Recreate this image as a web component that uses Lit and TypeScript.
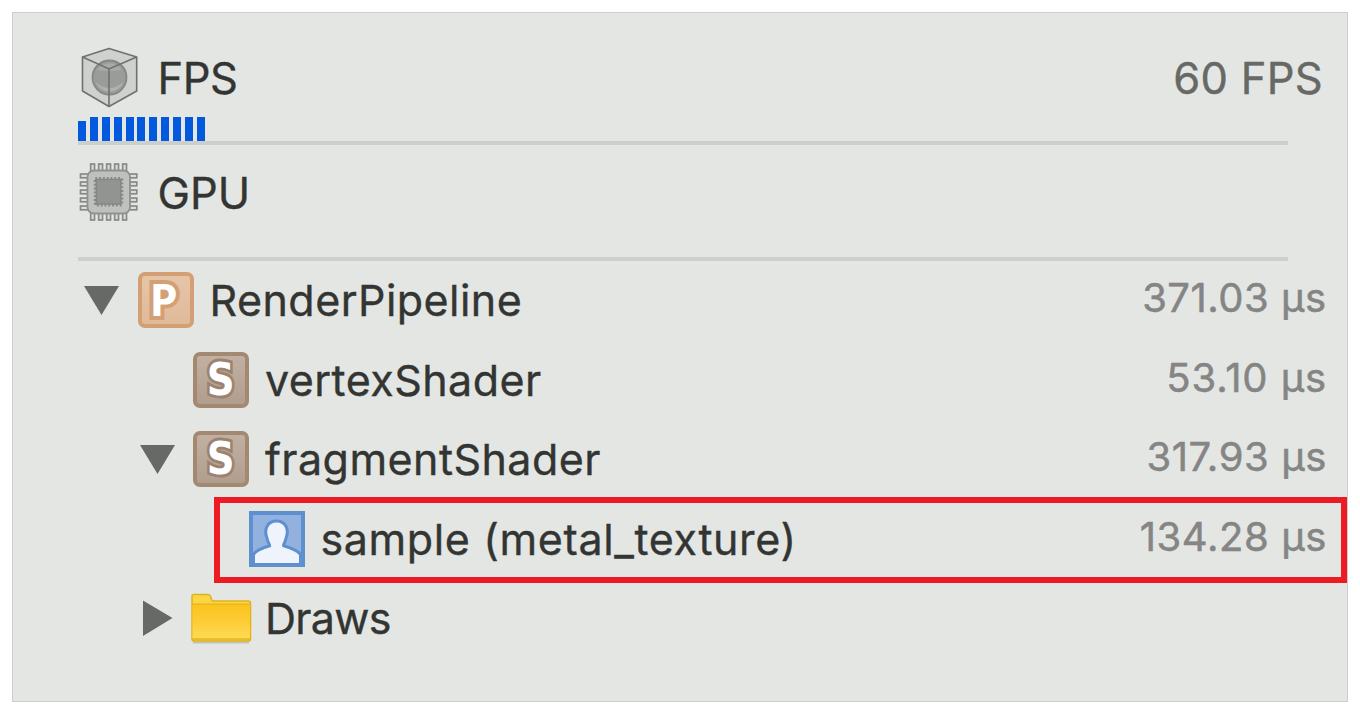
import { LitElement, html, css, svg, nothing } from "lit";
import { customElement, property } from "lit/decorators.js";

const range = (n: number) => Array.from({ length: n }, (_, i) => i);

const cubeIcon = html`<svg width="60" height="62" viewBox="80 46 60 62">
  <path d="M109 48.500 L136.700 57 V91 L109 106.500 L82.500 91 V57Z" fill="#cfd1ce" stroke="#6f716f" stroke-width="1.600" stroke-linejoin="round"/>
  <circle cx="109.500" cy="77.500" r="17" fill="#9a9c99" stroke="#858785" stroke-width="1.800"/>
  <path d="M97 70a15 15 0 0 1 25 0l-13.500 1Z" fill="#a8aaa7"/>
  <path d="M95.500 82a15 15 0 0 0 28 0q-14 12-28 0Z" fill="#afb1ae"/>
  <path d="M82.500 57 L109 69 L136.700 57 M109 69V106" fill="none" stroke="#6f716f" stroke-width="1.600"/>
</svg>`;

const chipIcon = html`<svg width="60" height="60" viewBox="79 162 60 60">
  <g fill="#dcdedb" stroke="#888a87" stroke-width="1.700">
    ${range(5).map((i) => svg`
      <rect x=${90.7 + i * 8} y="164" width="3.8" height="8"/>
      <rect x=${90.7 + i * 8} y="212" width="3.8" height="8"/>
      <rect x="80.500" y=${174 + i * 8} width="8" height="3.8"/>
      <rect x="128.800" y=${174 + i * 8} width="8" height="3.8"/>`)}
  </g>
  <rect x="87.500" y="170.500" width="42.500" height="43" rx="6.500" fill="#bfc1be" stroke="#8f918e" stroke-width="1.800"/>
  <rect x="95.300" y="178.500" width="26.500" height="26.500" fill="none" stroke="#888a87" stroke-width="3" stroke-dasharray="1.900 1.900"/>
  <rect x="96.300" y="179.500" width="24.500" height="24.500" fill="#929491" stroke="#858784" stroke-width="1.500"/>
</svg>`;

const letterIcon = (letter: string, kind: string, x: number, y: number) => html`
  <svg class=${kind} width="56" height="56" viewBox="0 0 56 56">
    <defs><linearGradient id="g" x1="0" y1="0" x2="0" y2="1">
      <stop class="top" offset="0"/><stop class="bottom" offset="1"/></linearGradient></defs>
    <rect x="2" y="2" width="52" height="52" rx="5" fill="url(#g)" class="edge" stroke-width="4"/>
    <text x=${x} y=${y} class="letter">${letter}</text>
  </svg>`;

const personIcon = html`<svg width="56" height="56" viewBox="0 0 56 56">
  <rect x="2" y="2" width="52" height="52" fill="#93b1df" stroke="#5e90d0" stroke-width="4"/>
  <path d="M6 52V44Q8 40 22 36C23 33 20 31 19.500 27C16 18 20 11.500 27.500 11.500S39 18 35.500 27C35 31 32 33 33.500 36Q47 40 50 44V52Z"
    fill="#eef3fc" stroke="#5e90d0" stroke-width="6" stroke-linejoin="round" paint-order="stroke"/>
  <path d="M2 2H54V54H2Z" fill="none" stroke="#5e90d0" stroke-width="4"/>
</svg>`;

const folderIcon = html`<svg width="62" height="52" viewBox="190 592.500 62 52">
  <defs><linearGradient id="f" x1="0" y1="0" x2="0" y2="1">
    <stop offset="0" stop-color="#fbc31d"/><stop offset=".45" stop-color="#fdcb33"/><stop offset="1" stop-color="#fddb55"/></linearGradient></defs>
  <path d="M193 643H249" stroke="#bfc1be" stroke-width="1.800"/>
  <path d="M192 597q0-2 2-2h14q2 0 2.500 2l1 3q.5 1.500 2 1.500H248q2.500 0 2.500 2.500V639.500q0 2-2 2H194q-2 0-2-2Z" fill="#fcd545" stroke="#dfb21a" stroke-width="1.500"/>
  <rect x="192.500" y="604.700" width="57.500" height="34.500" fill="url(#f)"/>
  <path d="M192 604.700H250.500 M192.500 639.500H250" stroke="#e3b51d" stroke-width="1.300"/>
</svg>`;

const icons: Record<string, unknown> = {
  P: letterIcon("P", "pipeline", 11.5, 43.5),
  S: letterIcon("S", "shader", 15.5, 43.500),
  person: personIcon,
  folder: folderIcon,
};

interface Row {
  name: string;
  cls: string;
  depth: number;
  icon: string;
  arrow?: "open" | "closed";
  time?: string;
}

const rows: Row[] = [
  { name: "RenderPipeline", cls: "render", depth: 0, icon: "P", arrow: "open", time: "371.03 µs" },
  { name: "vertexShader", cls: "vertex", depth: 1, icon: "S", time: "53.10 µs" },
  { name: "fragmentShader", cls: "fragment", depth: 1, icon: "S", arrow: "open", time: "317.93 µs" },
  { name: "sample (metal_texture)", cls: "sample", depth: 2, icon: "person", time: "134.28 µs" },
  { name: "Draws", cls: "draws", depth: 1, icon: "folder", arrow: "closed" },
];

@customElement("tree-row")
class TreeRow extends LitElement {
  @property({ attribute: false }) row!: Row;

  static styles = css`
    :host { display: block; height: 79.5px; }
    .row { display: flex; align-items: center; height: 100%; position: relative; }
    .d0 { padding-left: 70px; }
    .d1 { padding-left: 125.500px; }
    .d2 { padding-left: 181px; }
    .arrow { width: 36px; height: 36px; margin-right: 18.500px; flex: none; }
    .icon { width: 56px; height: 56px; flex: none; display: flex; align-items: center; justify-content: center; }
    .icon svg { flex: none; display: block; overflow: visible; }
    .name { flex: 1; margin-left: 16px; font-size: 43px; line-height: 56px; color: #333533; white-space: pre; letter-spacing: 0.45px; -webkit-text-stroke: 0.35px #333533; }
    .sample { letter-spacing: 0.62px; }
    .draws { letter-spacing: -0.7px; }
    .time { margin-right: 20.500px; font-size: 40px; line-height: 56px; color: #848584; white-space: pre; padding-bottom: 4px; letter-spacing: 0.5px; -webkit-text-stroke: 0.5px #848584; }
    .time.vertex { letter-spacing: 0.9px; margin-right: 20px; }
    .time.fragment, .time.sample { margin-right: 20px; letter-spacing: 0.6px; }
    .letter { font: 700 45px "Open Sans", sans-serif; fill: #fff; paint-order: stroke; stroke: var(--edge); stroke-width: 8px; }
    .edge { stroke: var(--edge); }
    .top { stop-color: var(--top); }
    .bottom { stop-color: var(--bottom); }
    .pipeline { --edge: #d59f75; --top: #e6c5a8; --bottom: #dfba99; }
    .shader { --edge: #a48972; --top: #c2b0a2; --bottom: #b09d8e; }
    .shader .letter { font: 700 44px "DejaVu Sans", sans-serif; transform: scaleX(0.88); stroke: #9c8370; stroke-width: 6px; }
    .mark { position: absolute; left: 201px; right: 0; top: -2.250px; height: 86px; box-sizing: border-box; border: 6px solid #ed1c24; }
  `;

  render() {
    const r = this.row;
    return html`<div class="row d${r.depth}">
      <svg class="arrow" viewBox="0 0 36 36">
        ${r.arrow === "open" ? svg`<path d="M1 4H36L18.500 33Z" fill="#666966"/>`
          : r.arrow === "closed" ? svg`<path d="M4 .5V36L33.500 18Z" fill="#666966"/>` : nothing}
      </svg>
      <span class="icon">${icons[r.icon]}</span>
      <span class="name ${r.cls}">${r.name}</span>
      ${r.time ? html`<span class="time ${r.cls}">${r.time}</span>` : nothing}
      ${r.icon === "person" ? html`<div class="mark"></div>` : nothing}
    </div>`;
  }
}

@customElement("app-root")
class AppRoot extends LitElement {
  static styles = css`
    :host { display: block; box-sizing: border-box; width: 1360px; height: 714px; padding: 12px; background: #fff; font-family: Inter, sans-serif; }
    .panel { box-sizing: border-box; height: 690px; border: 1px solid #cdcfcc; background: #e4e6e3; overflow: hidden; }
    .gauge { display: flex; flex-direction: column; box-sizing: border-box; margin: 0 59px 0 65px; border-bottom: 4px solid #cdcfcc; }
    .fps { height: 132px; padding-top: 33px; }
    .gpu { height: 115.500px; padding-top: 15.500px; }
    .head { display: flex; align-items: center; height: 62px; margin-right: -34px; padding-left: 2px; }
    .gpu .head { padding-left: 1px; }
    .head svg { flex: none; }
    .title { flex: 1; font-size: 43.500px; line-height: 60px; color: #333533; margin-left: 17.500px; padding-top: 2px; letter-spacing: -0.5px; -webkit-text-stroke: 0.35px #333533; }
    .gpu .title { margin-left: 18.500px; padding-top: 3px; letter-spacing: 0; }
    .value { font-size: 43.500px; line-height: 60px; color: #666966; padding-top: 2px; letter-spacing: 0.3px; margin-right: -1px; -webkit-text-stroke: 0.4px #666966; }
    .bars { display: flex; align-items: flex-end; gap: 3.900px; height: 24px; margin-top: auto; }
    .bar { width: 8px; height: 24px; background: #0259de; }
    .bar:first-child { height: 20px; }
  `;

  render() {
    return html`<main class="panel">
      <section class="gauge fps">
        <div class="head">${cubeIcon}<span class="title">FPS</span><span class="value">60 FPS</span></div>
        <div class="bars">${range(11).map(() => html`<i class="bar"></i>`)}</div>
      </section>
      <section class="gauge gpu">
        <div class="head">${chipIcon}<span class="title">GPU</span></div>
      </section>
      ${rows.map((row) => html`<tree-row .row=${row}></tree-row>`)}
    </main>`;
  }
}
